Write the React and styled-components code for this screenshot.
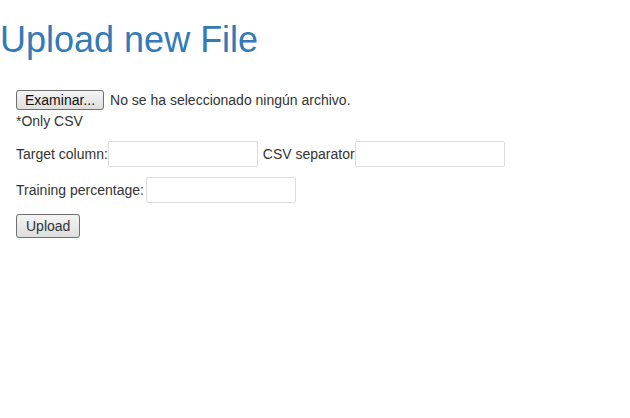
import { useState } from 'react';
import styled, { createGlobalStyle } from 'styled-components';

const GlobalStyle = createGlobalStyle`
    html, body {
        margin: 0;
        padding: 0;
        background: #fff;
    }
    body {
        font-family: "Liberation Sans", Arial, sans-serif;
        font-size: 14px;
        line-height: 20px;
        color: #333;
    }
`;

const Title = styled.h1`
    margin: 20px 0 0 0;
    font-size: 36px;
    font-weight: 500;
    line-height: 1.1;
    color: #337ab7;
`;

const Form = styled.form`
    padding: 29px 16px 0 16px;
`;

const FileRow = styled.div`
    display: flex;
    align-items: center;
    height: 22px;
`;

const HiddenInput = styled.input`
    display: none;
`;

const Button = styled.button`
    box-sizing: border-box;
    height: ${({ $h }) => $h}px;
    padding: 0 ${({ $px }) => $px}px;
    font-family: "Liberation Sans", Arial, sans-serif;
    font-size: 14px;
    line-height: 1;
    color: ${({ $dark }) => ($dark ? '#111' : '#333')};
    background: linear-gradient(#f4f4f4, #dedede);
    border: 1px solid #707070;
    border-radius: 3px;
    cursor: pointer;
`;

const FileName = styled.span`
    margin-left: 6px;
`;

const Note = styled.div`
    height: 20px;
`;

const FieldRow = styled.div`
    display: flex;
    align-items: center;
    margin-top: 10px;
`;

const Label = styled.label`
    flex: none;
    margin-left: ${({ $ml }) => $ml || 0}px;
    margin-right: ${({ $mr }) => $mr || 0}px;
`;

const TextInput = styled.input`
    flex: none;
    box-sizing: border-box;
    width: 150px;
    height: 26px;
    padding: 0 4px;
    border: 1px solid #dcdcdc;
    border-radius: 2px;
    font-family: "Liberation Sans", Arial, sans-serif;
    font-size: 14px;
    color: #333;
    outline: none;
`;

const SubmitRow = styled.div`
    margin-top: 11px;
`;

export default function App() {
    const [fileName, setFileName] = useState('');

    return (
        <>
            <GlobalStyle />
            <Title>Upload new File</Title>
            <Form onSubmit={(e) => e.preventDefault()}>
                <FileRow>
                    <HiddenInput
                        id="file"
                        type="file"
                        accept=".csv"
                        onChange={(e) => setFileName(e.target.files[0]?.name || '')}
                    />
                    <Button type="button" $h={20} $px={8} $dark onClick={() => document.getElementById('file').click()}>
                        Examinar...
                    </Button>
                    <FileName>{fileName || 'No se ha seleccionado ningún archivo.'}</FileName>
                </FileRow>
                <Note>*Only CSV</Note>
                <FieldRow>
                    <Label htmlFor="target">Target column:</Label>
                    <TextInput id="target" type="text" />
                    <Label htmlFor="sep" $ml={5}>CSV separator</Label>
                    <TextInput id="sep" type="text" />
                </FieldRow>
                <FieldRow>
                    <Label htmlFor="train" $mr={2}>Training percentage:</Label>
                    <TextInput id="train" type="text" />
                </FieldRow>
                <SubmitRow>
                    <Button type="submit" $h={24} $px={9}>Upload</Button>
                </SubmitRow>
            </Form>
        </>
    );
}
